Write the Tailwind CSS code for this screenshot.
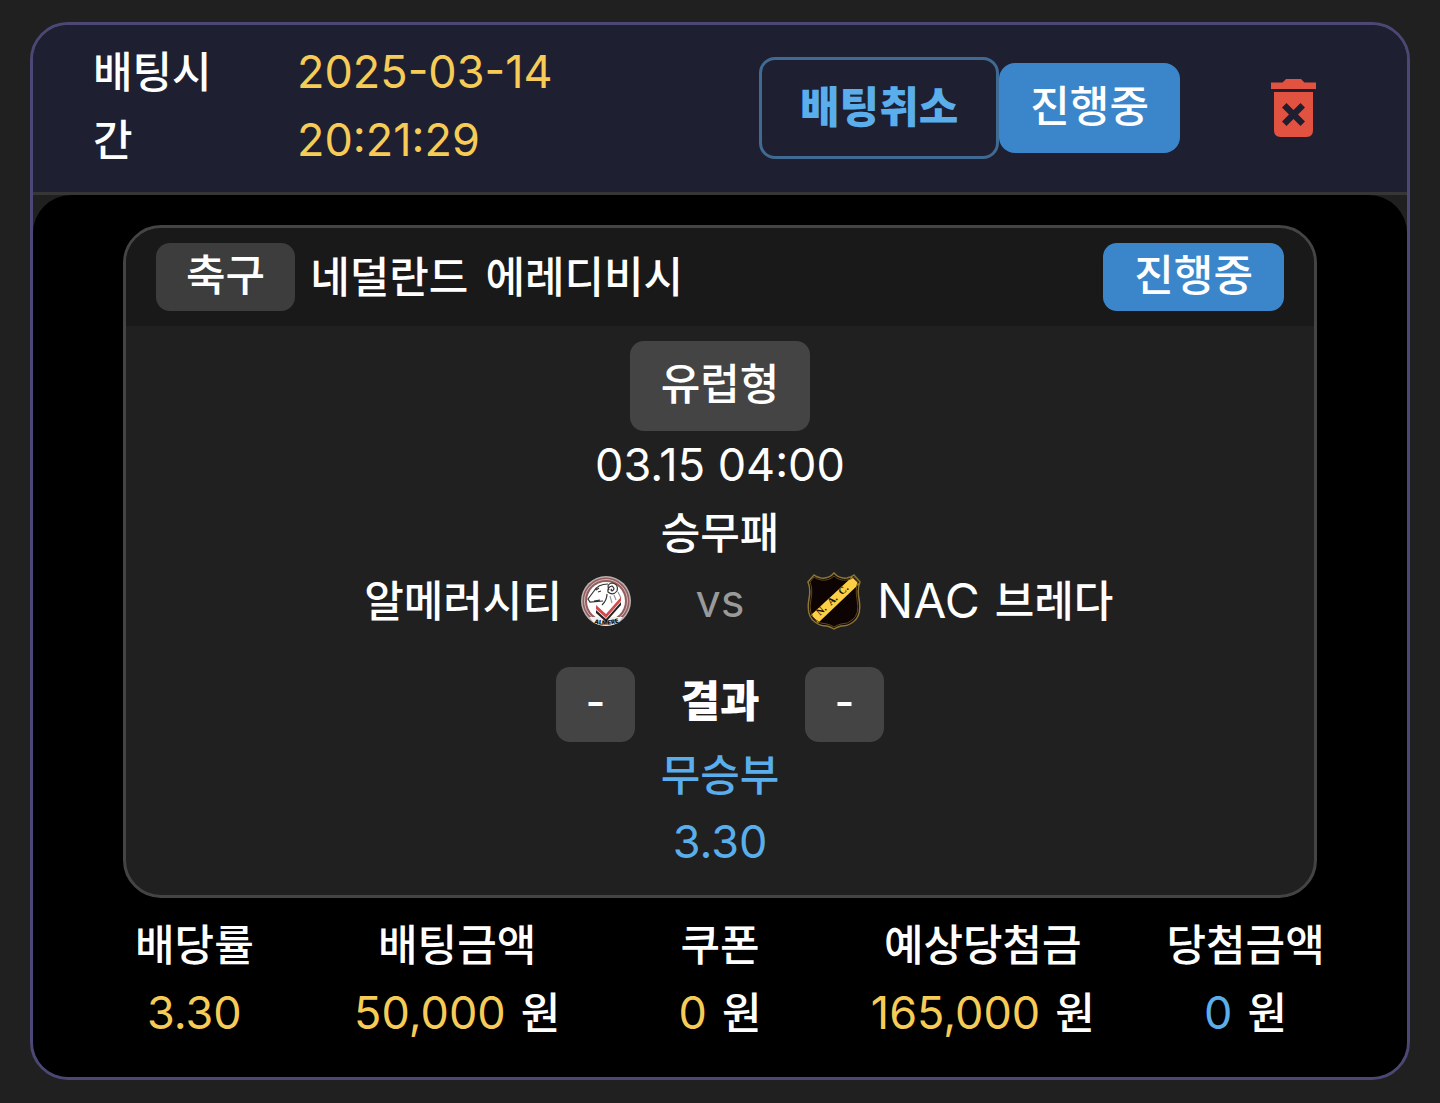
<!DOCTYPE html>
<html lang="ko">
<head>
    <meta charset="UTF-8">
    <meta name="viewport" content="width=device-width, initial-scale=1.0">
    <title>배팅내역</title>
    <!-- Tailwind CSS -->
    <script src="https://cdn.jsdelivr.net/npm/@tailwindcss/browser@4"></script>
</head>
<body class="bg-[#202020] text-white font-['Inter','Noto_Sans_CJK_KR',sans-serif] text-[43px] leading-[68px] font-medium px-[30px] pt-[22px] pb-[22px]">
    <main class="border-3 border-[#4c4876] rounded-[38px] overflow-hidden">
        <!-- Bet header -->
        <header class="flex items-center bg-[#1e2032] border-b-3 border-[#363636] pl-[60px] pr-[91px] pt-[13px] pb-[14px]">
            <div class="flex pb-[4px]">
                <div class="w-32 break-all">배팅시간</div>
                <time datetime="2025-03-14T20:21:29" class="w-[270px] ml-[76px] text-[#f6cc57] text-[45px] font-normal">2025-03-14 20:21:29</time>
            </div>
            <div class="flex items-center ml-auto mr-[91px]">
                <button type="button" class="border-3 border-[#416a92] rounded-2xl px-[38px] pt-[13px] pb-[15px] font-black text-[#5aaeec]">배팅취소</button>
                <span class="bg-[#3b86ca] rounded-2xl px-[31px] pt-[9px] pb-[13px]">진행중</span>
            </div>
            <button type="button" aria-label="삭제">
                <svg class="w-[45px] h-[58px]" viewBox="0 0 45 58" fill="#e15241">
                    <path d="M0 3.500H11.500L15 0H30L33.500 3.500H45V10H0Z"/>
                    <path fill-rule="evenodd" d="M3 13H42V51.500Q42 58 35.500 58H9.500Q3 58 3 51.500ZM11 28.500L18 35.500L11 42.500L15.500 47L22.500 40L29.500 47L34 42.500L27 35.500L34 28.500L29.500 24L22.500 31L15.500 24Z"/>
                </svg>
            </button>
        </header>

        <div class="bg-black rounded-t-[38px] p-[30px]">
            <!-- Match card -->
            <section class="mx-[60px] border-3 border-[#444] rounded-[38px] overflow-hidden bg-[#202020]">
                <div class="flex items-center bg-[#191919] px-[30px] py-[15px]">
                    <span class="bg-[#3d3d3d] rounded-[14px] px-[30px] h-[68px] leading-[64px]">축구</span>
                    <h2 class="flex gap-[17px] ml-[15px] leading-[64px]"><span>네덜란드</span> <span>에레디비시</span></h2>
                    <span class="ml-auto bg-[#3b86ca] rounded-[14px] px-[31px] h-[68px] leading-[64px]">진행중</span>
                </div>

                <div class="flex flex-col items-center pt-[15px] pb-[19px]">
                    <span class="bg-[#444] rounded-[14px] px-[31px] pt-[9px] pb-[13px]">유럽형</span>
                    <time datetime="2025-03-15T04:00" class="text-[45px] font-normal">03.15 04:00</time>
                    <p>승무패</p>

                    <div class="grid grid-cols-[1fr_170px_1fr] items-center w-full">
                        <div class="flex items-center justify-end gap-[15px]">
                            <span>알메러시티</span>
                            <svg class="w-[58px] h-[58px]" viewBox="0 0 58 58" role="img" aria-label="알메러시티 로고">
                                <circle cx="29" cy="29" r="25" fill="#b9b0b0"/>
                                <circle cx="29" cy="29" r="23.500" fill="#955c5d"/>
                                <circle cx="29" cy="29" r="21.500" fill="none" stroke="#cdbcbc" stroke-width="1"/>
                                <circle cx="29" cy="29" r="19" fill="#fff"/>
                                <path d="M12 45L46 45L41 51Q29 57 17 51Z" fill="#eee"/>
                                <g fill="none" stroke="#333" stroke-width="1.200">
                                    <path d="M32 18Q29 12 35 11Q42 12 40 19Q36 24 31 20Q30 15 35 14Q39 17 35 19Q33 18 35 17"/>
                                    <path d="M31 12Q21 12 17 19L11 27L13 30L26 29M19 18L22 16M21 20L24 19M30 22Q30 28 25 33M17 29L23 28"/>
                                    <path d="M33 24L35 31M37 23L39 28M41 20L44 26" stroke="#999"/>
                                </g>
                                <path d="M19 33L29 42L44 25V29L29 46L19 37Z" fill="#d34a4c"/>
                                <path d="M19 38L29 47L44 30V33L29 50L19 41Z" fill="#222"/>
                                <path id="almereArc" d="M14 50Q29 56 45 49" fill="none"/>
                                <text font-size="6" font-weight="900" fill="#111" text-anchor="middle"><textPath href="#almereArc" startOffset="50%">ALMERE</textPath></text>
                            </svg>
                        </div>
                        <span class="text-center text-[#9a9a9a] text-[45px] font-normal">vs</span>
                        <div class="flex items-center gap-[14px]">
                            <svg class="w-[58px] h-[58px]" viewBox="0 0 58 58" role="img" aria-label="NAC 브레다 로고">
                                <path d="M29 1Q34 7 42 6Q47 5 49 3L55 10Q52 17 54 27Q57 44 48 50Q43 54 36 54Q32 55 29 57Q26 55 22 54Q15 54 10 50Q1 44 4 27Q6 17 3 10L9 3Q11 5 16 6Q24 7 29 1Z" fill="#0d0303" stroke="#8c7635" stroke-width="1.500"/>
                                <path d="M47 5L54 12L13 51L6 43Z" fill="#fccf45"/>
                                <path d="M29 4Q34 9 42 8Q47 7 49 5L53 10Q50 17 52 27Q55 43 47 48Q43 52 36 52Q32 53 29 55Q26 53 22 52Q15 52 11 48Q3 43 6 27Q8 17 5 10L9 5Q11 7 16 8Q24 9 29 4Z" fill="none" stroke="#5c4a1c" stroke-width="1"/>
                                <text transform="translate(15 44) rotate(-43)" font-family="Liberation Serif" font-size="10" font-weight="700" fill="#171005"><tspan x="0">N.</tspan><tspan x="15">A.</tspan><tspan x="30">C.</tspan></text>
                            </svg>
                            <span class="flex items-center gap-[15px]"><span class="text-[48px] font-normal">NAC</span> <span>브레다</span></span>
                        </div>
                    </div>

                    <div class="grid grid-cols-[1fr_170px_1fr] items-start w-full mt-[32px] text-center">
                        <span class="justify-self-end w-[79px] h-[75px] bg-[#444] rounded-[14px]">-</span>
                        <strong class="font-black">결과</strong>
                        <span class="w-[79px] h-[75px] bg-[#444] rounded-[14px]">-</span>
                    </div>

                    <p class="leading-[66px] text-[#5aaeec]">무승부</p>
                    <p class="text-[#5aaeec] text-[45px] font-normal">3.30</p>
                </div>
            </section>

            <!-- Totals -->
            <dl class="grid grid-cols-5 text-center mt-[13px]">
                <div>
                    <dt>배당률</dt>
                    <dd class="text-[45px] font-normal text-[#f6cc57]">3.30</dd>
                </div>
                <div>
                    <dt>배팅금액</dt>
                    <dd class="flex justify-center gap-[15px]"><span class="text-[45px] font-normal text-[#f6cc57]">50,000</span> <span>원</span></dd>
                </div>
                <div>
                    <dt>쿠폰</dt>
                    <dd class="flex justify-center gap-[15px]"><span class="text-[45px] font-normal text-[#f6cc57]">0</span> <span>원</span></dd>
                </div>
                <div>
                    <dt>예상당첨금</dt>
                    <dd class="flex justify-center gap-[15px]"><span class="text-[45px] font-normal text-[#f6cc57]">165,000</span> <span>원</span></dd>
                </div>
                <div>
                    <dt>당첨금액</dt>
                    <dd class="flex justify-center gap-[15px]"><span class="text-[45px] font-normal text-[#5aaeec]">0</span> <span>원</span></dd>
                </div>
            </dl>
        </div>
    </main>
</body>
</html>
